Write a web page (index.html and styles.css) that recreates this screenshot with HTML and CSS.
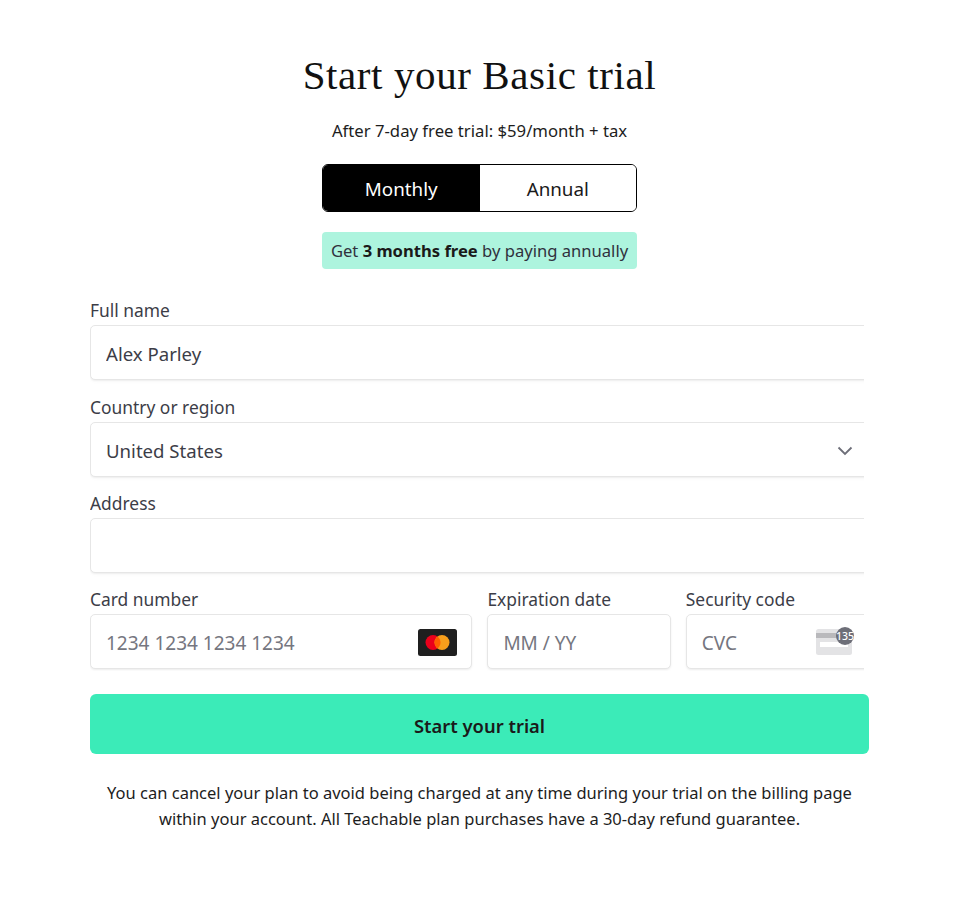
FILE: index.html
```html
<!DOCTYPE html>
<html lang="en">
<head>
<meta charset="utf-8">
<title>Start your Basic trial</title>
<link rel="stylesheet" href="styles.css">
</head>
<body>
<main class="page">
  <h1 class="title">Start your Basic trial</h1>
  <p class="subtitle">After 7-day free trial: $59/month + tax</p>
  <div class="toggle">
    <button class="toggle-btn is-active" type="button">Monthly</button>
    <button class="toggle-btn" type="button">Annual</button>
  </div>
  <p class="promo">Get <b>3 months free</b> by paying annually</p>
  <form class="form">
    <div class="clip">
      <div class="field">
        <label class="label" for="name">Full name</label>
        <input class="input" id="name" value="Alex Parley">
      </div>
      <div class="field">
        <label class="label" for="country">Country or region</label>
        <div class="input-wrap">
          <select class="input select" id="country"><option>United States</option></select>
          <svg class="chevron" width="16" height="10" viewBox="0 0 16 10"><path d="M1.5 1.5 8 8l6.500-6.500" fill="none" stroke="#6d6e78" stroke-width="1.800"/></svg>
        </div>
      </div>
      <div class="field">
        <label class="label" for="address">Address</label>
        <input class="input" id="address">
      </div>
      <div class="card-row">
        <div class="cell">
          <label class="label" for="card">Card number</label>
          <div class="input-wrap">
            <input class="input" id="card" placeholder="1234 1234 1234 1234">
            <svg class="brand" width="39" height="27" viewBox="0 0 39 27">
              <rect width="39" height="27" rx="2.500" fill="#1f1f1f"/>
              <circle cx="15" cy="13.500" r="7.500" fill="#eb001b"/>
              <circle cx="24" cy="13.500" r="7.500" fill="#f79e1b"/>
              <path d="M19.500 7.500a7.500 7.500 0 0 1 0 12 7.500 7.500 0 0 1 0-12z" fill="#ff5f00"/>
            </svg>
          </div>
        </div>
        <div class="cell">
          <label class="label" for="exp">Expiration date</label>
          <input class="input" id="exp" placeholder="MM / YY">
        </div>
        <div class="cell cell-cvc">
          <label class="label" for="cvc">Security code</label>
          <div class="input-wrap">
            <input class="input" id="cvc" placeholder="CVC">
            <svg class="cvc-icon" width="38" height="28" viewBox="0 0 38 28">
              <rect x="0" y="2" width="36" height="26" rx="2.500" fill="#e3e3e5"/>
              <rect x="0" y="6" width="36" height="5" fill="#b9b9bc"/>
              <rect x="4" y="15" width="28" height="5" fill="#fff"/>
              <circle cx="29" cy="9" r="9" fill="#6d6e78"/>
              <text x="29" y="12.500" text-anchor="middle" class="cvc-num">135</text>
            </svg>
          </div>
        </div>
      </div>
    </div>
    <button class="submit" type="button">Start your trial</button>
  </form>
  <p class="note">You can cancel your plan to avoid being charged at any time during your trial on the billing page<br>within your account. All Teachable plan purchases have a 30-day refund guarantee.</p>
</main>
</body>
</html>
```

FILE: styles.css
```css
* { box-sizing: border-box; }
html, body { margin: 0; background: #fff; }
body { font-family: "Noto Sans", "Open Sans", sans-serif; color: #1a1a1a; }
.page { width: 959px; padding-top: 51px; display: flex; flex-direction: column; align-items: center; }
.title { margin: 0; font-family: "Liberation Serif", serif; font-weight: 400; font-size: 41px; line-height: 48px; letter-spacing: 0.6px; color: #111; }
.subtitle { margin: 20px 0 0; font-size: 16.700px; line-height: 24px; color: #1d1d1d; }
.toggle { margin-top: 21px; width: 315px; height: 48px; display: flex; border: 1px solid #000; border-radius: 6px; overflow: hidden; }
.toggle-btn { flex: 1; border: 0; padding: 2px 0 0; background: #fff; color: #1a1a1a; font: inherit; font-size: 18.800px; }
.is-active { background: #000; color: #fff; }
.promo { margin: 20px 0 0; width: 315px; height: 37px; background: #adf4de; border-radius: 4px; font-size: 16.600px; line-height: 37px; text-align: center; color: #30313d; white-space: nowrap; }
.promo b { color: #1a1a1a; font-weight: 700; }
.form { width: 779px; margin-top: 30.400px; display: flex; flex-direction: column; }
.clip { width: 774px; overflow: hidden; display: flex; flex-direction: column; gap: 15.330px; padding-bottom: 2px; }
.label { display: block; height: 22px; margin-bottom: 4px; font-size: 17.400px; line-height: 22px; color: #3c3d47; }
.input { display: block; width: 100%; height: 55px; padding: 2px 15px 0; background: #fff; border: 1px solid #e6e6e6; border-radius: 5px; box-shadow: 0 1px 2px rgba(0,0,0,.06), 0 2px 4px rgba(0,0,0,.02); font: inherit; font-size: 18.600px; color: #3c3d47; outline: 0; }
.input::placeholder { color: #757680; opacity: 1; }
#card, #exp, #cvc { font-size: 19px; }
.field .input, .field .input-wrap { width: calc(100% + 12px); }
.field .input-wrap .input { width: 100%; }
.input-wrap { position: relative; }
.select { appearance: none; }
.chevron { position: absolute; right: 23px; top: 24px; }
.card-row { display: grid; grid-template-columns: 382.400px 183.400px 1fr; column-gap: 15px; margin-right: -12px; }
.brand { position: absolute; right: 15px; top: 15px; }
.cvc-icon { position: absolute; left: 130px; top: 13px; }
.cvc-num { font-size: 10.500px; fill: #fff; font-weight: 500; }
.submit { margin-top: 22.600px; height: 60px; width: 100%; border: 0; border-radius: 6px; background: #3bebb8; padding: 3px 0 0; font: inherit; font-size: 18.400px; font-weight: 600; color: #1a1a1a; }
.note { margin: 26px 0 0; font-size: 16.500px; line-height: 26px; text-align: center; color: #1d1d1d; white-space: nowrap; }
```
